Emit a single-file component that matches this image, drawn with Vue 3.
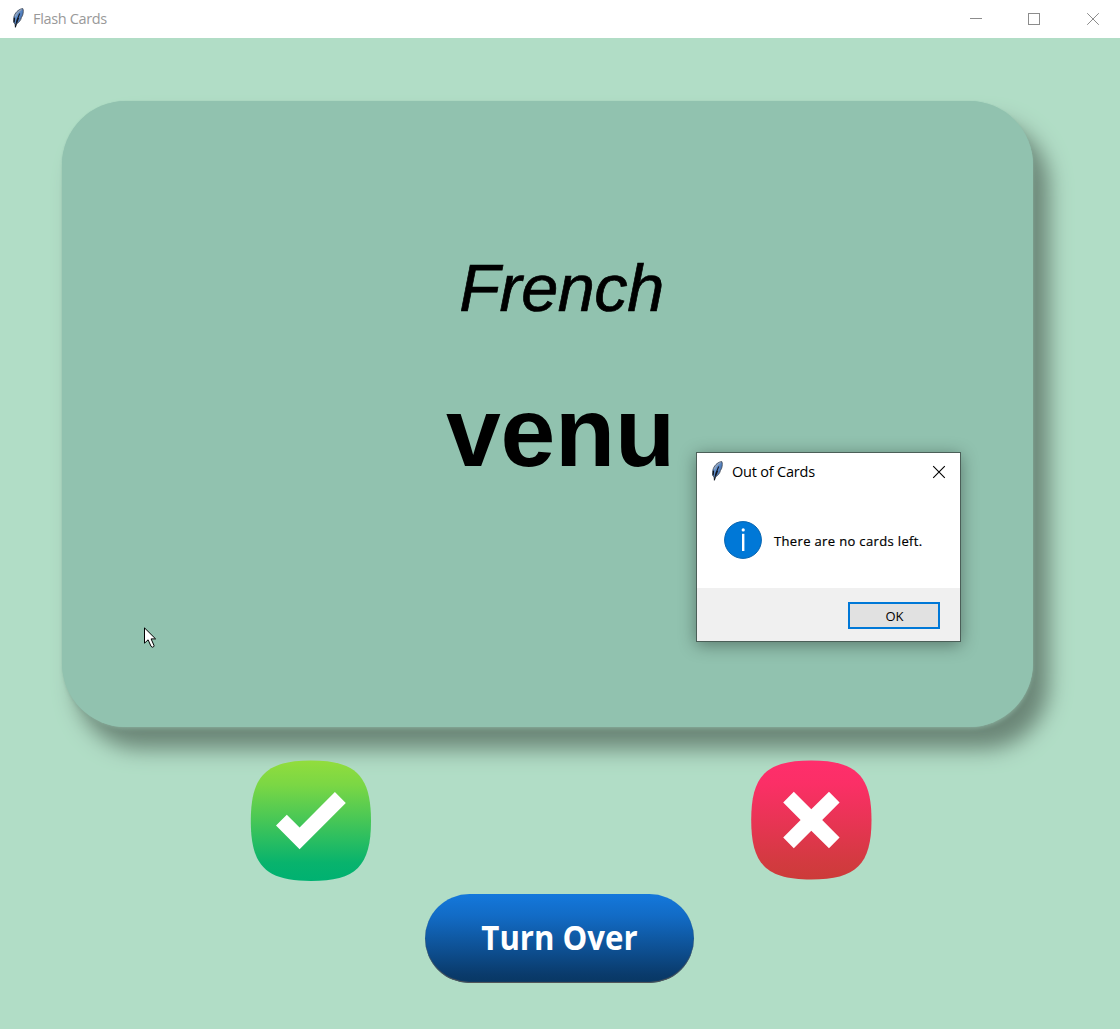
<script setup>
const title = 'Flash Cards'
const card = { language: 'French', word: 'venu' }
const message = { title: 'Out of Cards', text: 'There are no cards left.' }
</script>

<template>
  <div class="window">
    <svg class="defs" width="0" height="0" aria-hidden="true">
      <defs>
        <linearGradient id="plume" x1="0" y1="0" x2="1" y2="1">
          <stop offset="0" stop-color="#7fb0ea" />
          <stop offset="1" stop-color="#2c5698" />
        </linearGradient>
        <symbol id="feather" viewBox="0 0 12 20">
          <path d="M10.8 .6C7.6 .8 4 3.6 2.4 7.4C1.4 10 1.2 12.6 1.8 14.6L3 16L3.4 19.2L4.4 16C7 14.6 9 12 9.4 9.6L10.6 7.4C11.4 5 11.6 2 10.8 .6Z" fill="url(#plume)" stroke="#3d434d" stroke-width=".8" />
          <path d="M9.6 1.4C6.6 2.8 4.4 5.4 3.4 8.2" fill="none" stroke="#9aa5b5" stroke-width="1.1" />
          <path d="M7.8 5.5C6 9 4.2 12 3.4 19.2M2.6 9.6L2.2 14.4M6.6 9.8L4.8 14.6" fill="none" stroke="#12161e" stroke-width="1.1" />
        </symbol>
      </defs>
    </svg>

    <header class="titlebar">
      <svg class="feather"><use href="#feather" /></svg>
      <span class="title">{{ title }}</span>
      <div class="controls">
        <svg viewBox="0 0 58 38"><path d="M22 18.5H34" /></svg>
        <svg viewBox="0 0 58 38"><rect x="22.5" y="13.5" width="11" height="11" /></svg>
        <svg viewBox="0 0 58 38"><path d="M23.2 13.2L34.8 24.8M34.8 13.2L23.2 24.8" /></svg>
      </div>
    </header>

    <main class="body">
      <section class="card">
        <p class="language">{{ card.language }}</p>
        <p class="word">{{ card.word }}</p>
      </section>

      <div class="answers">
        <button class="answer" aria-label="Known">
          <svg viewBox="0 0 122 122">
            <defs>
              <linearGradient id="green" x1="0" y1="0" x2="0" y2="1">
                <stop offset="0" stop-color="#92dd3d" />
                <stop offset=".2" stop-color="#7bd744" />
                <stop offset=".85" stop-color="#08b36d" />
                <stop offset="1" stop-color="#00b171" />
              </linearGradient>
            </defs>
            <path d="M61 .5C106 .5 121 16 121 61C121 106 106 121 61 121C16 121 .8 106 .8 61C.8 16 16 .5 61 .5Z" fill="url(#green)" />
            <path d="M26 65.5L36.8 54.7L49.6 67.4L84.9 32L95.8 42.9L49.6 89.2Z" fill="#fff" />
          </svg>
        </button>
        <button class="answer" aria-label="Unknown">
          <svg viewBox="0 0 122 122">
            <defs>
              <linearGradient id="red" x1="0" y1="0" x2="0" y2="1">
                <stop offset="0" stop-color="#ff2e6c" />
                <stop offset=".2" stop-color="#fb2f66" />
                <stop offset=".85" stop-color="#d33a40" />
                <stop offset="1" stop-color="#cc3b39" />
              </linearGradient>
            </defs>
            <path d="M61.2 .5C106.5 .5 121.5 16 121.5 60C121.5 104 106.5 119.5 61.2 119.5C16 119.5 1.2 104 1.2 60C1.2 16 16 .5 61.2 .5Z" fill="url(#red)" />
            <path d="M33.2 42.4L43.8 31.8L61.3 49.2L79 31.8L89.6 42.4L72.2 60L89.6 77.6L79 88.2L61.3 70.8L43.8 88.2L33.2 77.6L50.6 60Z" fill="#fff" />
          </svg>
        </button>
      </div>

      <button class="turn"><span>Turn Over</span></button>
    </main>

    <div class="dialog" role="dialog">
      <div class="dialog-head">
        <svg class="feather"><use href="#feather" /></svg>
        <span class="dialog-title">{{ message.title }}</span>
        <svg class="dialog-close" viewBox="0 0 14 14"><path d="M1.2 1.2L12.8 12.8M12.8 1.2L1.2 12.8" /></svg>
      </div>
      <div class="dialog-body">
        <svg class="info" viewBox="0 0 38 38">
          <circle cx="19" cy="19" r="18.4" fill="#0078d7" stroke="#0664b0" stroke-width="1" />
          <path d="M19.2 12.8V30" stroke="#fff" stroke-width="2.4" />
          <circle cx="19.2" cy="8.9" r="1.6" fill="#fff" />
        </svg>
        <span class="dialog-text">{{ message.text }}</span>
      </div>
      <div class="dialog-foot">
        <button class="ok"><span>OK</span></button>
      </div>
    </div>

    <svg class="cursor" viewBox="0 0 13 22">
      <path d="M.5 .9V16.2L4.1 12.8L7 19.3Q8.2 21 9.8 19.6Q10.3 19 9.9 18.2L7.1 11.9H11.6Z" fill="#fff" stroke="#000" stroke-width="1" />
    </svg>
  </div>
</template>

<style>
body {
  margin: 0;
}
</style>

<style scoped>
.window {
  position: relative;
  display: flex;
  flex-direction: column;
  width: 1120px;
  height: 1029px;
  overflow: hidden;
  background: #b1ddc6;
  font-family: "Open Sans", "Noto Sans", sans-serif;
}
.defs {
  position: absolute;
}
p {
  margin: 0;
}
button {
  margin: 0;
  padding: 0;
  border: 0;
  background: none;
  font-family: inherit;
}
.titlebar {
  display: flex;
  align-items: center;
  flex: none;
  height: 38px;
  padding-left: 12px;
  background: #fff;
}
.feather {
  flex: none;
  width: 12px;
  height: 20px;
  margin-bottom: 2px;
}
.title {
  margin-left: 9px;
  color: #999;
  font-size: 14.5px;
  line-height: 20px;
  letter-spacing: -0.35px;
}
.controls {
  display: flex;
  margin-left: auto;
  margin-right: -2px;
}
.controls svg {
  width: 58px;
  height: 38px;
  fill: none;
  stroke: #8c8c8c;
  stroke-width: 1;
}
.body {
  display: flex;
  flex-direction: column;
  align-items: center;
  padding-top: 62px;
}
.card {
  display: flex;
  flex-direction: column;
  align-items: center;
  align-self: flex-start;
  width: 971px;
  height: 626px;
  margin: 0.5px 0 0 62px;
  border-radius: 64px;
  background: #91c2af;
  box-shadow: 0 0 1px #91c2af, 1px 3px 4px -1px #84a695, 15px 21px 21px 1px #6b8677;
  color: #000;
  font-family: "Liberation Sans", Arial, sans-serif;
}
.language {
  margin-top: 149px;
  padding-left: 28px;
  font-size: 66.67px;
  line-height: 76px;
  font-style: italic;
  letter-spacing: -0.5px;
  -webkit-text-stroke: 0.7px #000;
}
.word {
  margin-top: 49px;
  padding-left: 26px;
  font-size: 98.5px;
  line-height: 115px;
  font-weight: 700;
  letter-spacing: -0.2px;
}
.answers {
  display: flex;
  gap: 378px;
  margin: 33.5px 0 0 2px;
}
.answer {
  width: 122px;
  height: 122px;
}
.answer svg {
  display: block;
  width: 122px;
  height: 122px;
}
.turn {
  box-sizing: border-box;
  width: 269px;
  height: 89px;
  margin: 12px 0.5px 0 0;
  padding-bottom: 4px;
  border-radius: 45px;
  background: linear-gradient(#1478dc, #126bc5 25%, #0a3b6c 90%, #083763);
  box-shadow: inset 0 -1px 1px #5a5a58;
  color: #fff;
  font-size: 33.5px;
  line-height: 84px;
  font-weight: 700;
}
.turn span {
  display: block;
  transform: scaleX(0.93);
}
.dialog {
  position: absolute;
  left: 696px;
  top: 452px;
  display: flex;
  flex-direction: column;
  box-sizing: border-box;
  width: 265px;
  height: 190px;
  border: 1px solid #4b5f58;
  background: #fff;
  box-shadow: 0 3px 16px rgba(0, 0, 0, 0.38);
  color: #000;
}
.dialog-head {
  display: flex;
  align-items: center;
  height: 37px;
  padding: 0 14px;
}
.dialog-title {
  margin-left: 9px;
  font-size: 14.5px;
  letter-spacing: -0.2px;
}
.dialog-close {
  width: 14px;
  height: 14px;
  margin-left: auto;
  fill: none;
  stroke: #000;
  stroke-width: 1.1;
}
.dialog-body {
  display: flex;
  align-items: center;
  height: 98px;
  padding-left: 27px;
}
.info {
  width: 38px;
  height: 38px;
  margin-top: 1px;
}
.dialog-text {
  margin: 3px 0 0 12px;
  font-size: 13px;
  letter-spacing: 0.35px;
  -webkit-text-stroke: 0.2px #000;
}
.dialog-foot {
  display: flex;
  justify-content: flex-end;
  align-items: flex-start;
  flex: 1;
  padding: 14px 20px 0 0;
  background: #f0f0f0;
}
.ok {
  box-sizing: border-box;
  width: 92px;
  height: 27px;
  border: 2px solid #0078d7;
  background: #e1e1e1;
  color: #000;
  font-size: 13px;
  line-height: 24px;
}
.ok span {
  display: block;
  padding-left: 1px;
}
.cursor {
  position: absolute;
  left: 144px;
  top: 627px;
  width: 13px;
  height: 22px;
}
</style>
